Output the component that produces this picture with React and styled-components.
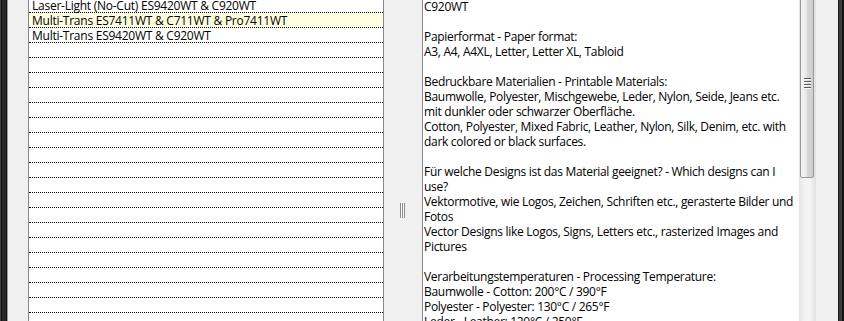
import styled, { createGlobalStyle } from 'styled-components';

const GlobalStyle = createGlobalStyle`
	html, body {
		margin: 0;
		padding: 0;
		background: #f0f0f0;
		overflow: hidden;
	}
`;

const Window = styled.div`
	display: flex;
	width: 844px;
	height: 321px;
	overflow: hidden;
	background: #f0f0f0;
	font-family: 'Open Sans', 'Noto Sans', sans-serif;
	font-size: 12px;
	letter-spacing: -0.3px;
	color: #000;
`;

const FrameEdge = styled.div`
	flex: 0 0 8px;
	background: ${(p) =>
		p.$side === 'left'
			? 'linear-gradient(90deg, #444 0 1px, #111 1px 2px, #2b2b2b 2px 6px, #111 6px 7px, #a0a0a0 7px 8px)'
			: 'linear-gradient(90deg, #1a1a1a 0 1px, #3c3c3c 1px 4px, #111 4px 6px, #6a6a6a 6px 8px)'};
`;

const Gutter = styled.div`
	flex: 0 0 ${(p) => p.$w}px;
`;

const ListPane = styled.div`
	flex: 0 0 354px;
	background: #fff;
	border-left: 1px solid #828790;
	border-right: 1px solid #828790;
	overflow: hidden;
`;

const Rows = styled.div`
	margin-top: -2px;
`;

const Row = styled.div`
	height: 13px;
	padding: 1px 0 0 3px;
	line-height: 13px;
	letter-spacing: -0.25px;
	white-space: nowrap;
	border-bottom: 1px dotted #000;
	background: ${(p) => (p.$active ? '#ffffe1' : '#fff')};
`;

const Splitter = styled.div`
	flex: 0 0 38px;
	padding: 203px 0 0 16px;
	box-sizing: border-box;
`;

const Grip = styled.div`
	width: 5px;
	height: 15px;
	background: repeating-linear-gradient(90deg, #8a8a8a 0 1px, #fdfdfd 1px 2px);
`;

const TextPane = styled.div`
	flex: 0 0 392px;
	display: flex;
	background: #fff;
	border-left: 1px solid #828790;
	border-right: 1px solid #e3e3e3;
	overflow: hidden;
`;

const TextBody = styled.div`
	flex: 1;
	padding-left: 1px;
	margin-top: -1px;
	line-height: 15px;
	white-space: nowrap;
	overflow: hidden;
`;

const Line = styled.div`
	height: 15px;
`;

const ScrollBar = styled.div`
	flex: 0 0 16px;
	display: flex;
	flex-direction: column;
	background: linear-gradient(90deg, #e4e4e4 0, #f2f2f2 30%, #f4f4f4 70%, #e4e4e4 100%);
`;

const Thumb = styled.div`
	margin: -4px 1px 0;
	height: 182px;
	box-sizing: border-box;
	border: 1px solid #979797;
	border-radius: 0 0 2px 2px;
	background: linear-gradient(90deg, #f4f4f4 0, #e9e9e9 45%, #d6d6d6 55%, #cfcfcf 100%);
	display: flex;
	flex-direction: column;
	align-items: center;
	padding-top: 81px;
	gap: 1px;
`;

const GripLine = styled.div`
	width: 7px;
	height: 1px;
	background: #5a5a5a;
	box-shadow: 0 1px 0 #f8f8f8;
	margin-bottom: 1px;
`;

const items = [
	'Laser-Light (No-Cut) ES9420WT & C920WT',
	'Multi-Trans ES7411WT & C711WT & Pro7411WT',
	'Multi-Trans ES9420WT & C920WT',
];

const text = [
	'C920WT',
	'',
	'Papierformat - Paper format:',
	'A3, A4, A4XL, Letter, Letter XL, Tabloid',
	'',
	'Bedruckbare Materialien - Printable Materials:',
	'Baumwolle, Polyester, Mischgewebe, Leder, Nylon, Seide, Jeans etc.',
	'mit dunkler oder schwarzer Oberfläche.',
	'Cotton, Polyester, Mixed Fabric, Leather, Nylon, Silk, Denim, etc. with',
	'dark colored or black surfaces.',
	'',
	'Für welche Designs ist das Material geeignet? - Which designs can I',
	'use?',
	'Vektormotive, wie Logos, Zeichen, Schriften etc., gerasterte Bilder und',
	'Fotos',
	'Vector Designs like Logos, Signs, Letters etc., rasterized Images and',
	'Pictures',
	'',
	'Verarbeitungstemperaturen - Processing Temperature:',
	'Baumwolle - Cotton: 200°C / 390°F',
	'Polyester - Polyester: 130°C / 265°F',
	'Leder - Leather: 120°C / 250°F',
];

const App = () => {
	const rows = Array.from({ length: 22 }, (_, i) => items[i] || '');
	return (
		<>
			<GlobalStyle />
			<Window>
				<FrameEdge $side="left" />
				<Gutter $w={20} />
				<ListPane>
					<Rows>
						{rows.map((r, i) => (
							<Row key={i} $active={i === 1}>
								{r}
							</Row>
						))}
					</Rows>
				</ListPane>
				<Splitter>
					<Grip />
				</Splitter>
				<TextPane>
					<TextBody>
						{text.map((t, i) => (
							<Line key={i}>{t}</Line>
						))}
					</TextBody>
					<ScrollBar>
						<Thumb>
							<GripLine />
							<GripLine />
							<GripLine />
							<GripLine />
						</Thumb>
					</ScrollBar>
				</TextPane>
				<Gutter $w={22} />
				<FrameEdge $side="right" />
			</Window>
		</>
	);
};

export default App;
